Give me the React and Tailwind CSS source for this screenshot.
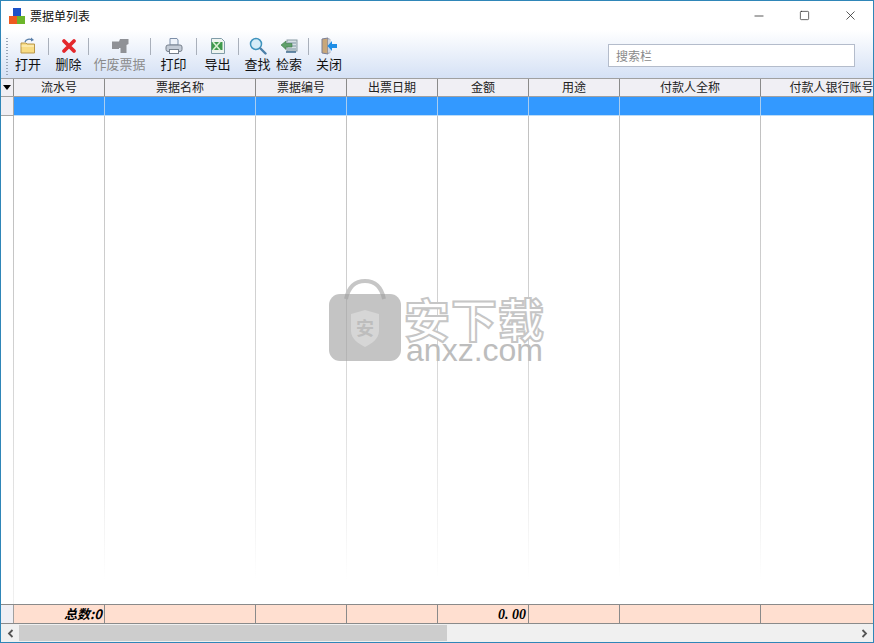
import { Minus, Square, X } from "lucide-react";

const columns = [
  { title: "流水号", w: "w-[91px]" },
  { title: "票据名称", w: "w-[151px]" },
  { title: "票据编号", w: "w-[91px]" },
  { title: "出票日期", w: "w-[91px]" },
  { title: "金额", w: "w-[91px]" },
  { title: "用途", w: "w-[91px]" },
  { title: "付款人全称", w: "w-[141px]" },
  { title: "付款人银行账号", w: "w-[141px]" },
];

function AppLogo() {
  return (
    <svg width="16" height="16" viewBox="0 0 16 16">
      <rect x="4" y="0" width="8" height="8" fill="#1c52c8" />
      <rect x="0" y="8" width="8" height="8" fill="#ee5a20" />
      <rect x="8" y="8" width="8" height="8" fill="#6cb52a" />
    </svg>
  );
}

function OpenIcon() {
  return (
    <svg width="18" height="18" viewBox="0 0 18 18">
      <path d="M2 6h5l1 1h7.500v9H2z" fill="#f8dc84" stroke="#b8964a" />
      <path d="M2.500 9h12.500" stroke="#fff6cf" />
      <path d="M6 5c1-3 4.500-3.500 7-2" fill="none" stroke="#5a7fa8" strokeWidth="1.300" />
      <path d="M12 0.500l3 2.500-3 1.500z" fill="#5a7fa8" />
    </svg>
  );
}

function DeleteIcon() {
  return (
    <svg width="16" height="16" viewBox="0 0 16 16">
      <path d="M3 3l10 10M13 3L3 13" stroke="#e4282c" strokeWidth="3.800" strokeLinecap="round" />
    </svg>
  );
}

function VoidIcon() {
  return (
    <svg width="18" height="16" viewBox="0 0 18 16">
      <path d="M1 3.500h7L9 1h8.500v5l-2 1v8h-6v-5H8v1H1z" fill="#8f9196" />
    </svg>
  );
}

function PrintIcon() {
  return (
    <svg width="18" height="18" viewBox="0 0 18 18">
      <path d="M5 8V1.500h7l1 1.500v5z" fill="#eef3fa" stroke="#7d8fa8" />
      <rect x="1" y="8" width="16" height="6.500" rx="2" fill="#c3cbd6" stroke="#77808c" />
      <rect x="4.500" y="12.500" width="9" height="4" fill="#fff" stroke="#77808c" />
    </svg>
  );
}

function ExportIcon() {
  return (
    <svg width="16" height="18" viewBox="0 0 16 18">
      <path d="M1.500 1.500h10l3 3v12h-13z" fill="#eef4f0" stroke="#7f9ca8" />
      <path d="M1.500 5h11v8h-11z" fill="#3f9a4c" />
      <path d="M3 5l7 8M10 5l-7 8" stroke="#d7efd2" strokeWidth="1.600" />
    </svg>
  );
}

function SearchIcon() {
  return (
    <svg width="18" height="18" viewBox="0 0 18 18">
      <circle cx="7" cy="7" r="5.500" fill="#d5ecf8" stroke="#3f93bd" strokeWidth="1.500" />
      <path d="M11.500 11.500l5 5" stroke="#4c7fa8" strokeWidth="2.400" strokeLinecap="round" />
    </svg>
  );
}

function FilterIcon() {
  return (
    <svg width="18" height="18" viewBox="0 0 18 18">
      <rect x="7" y="3" width="10" height="11" fill="#d6e0e4" stroke="#8a9ba3" />
      <path d="M8 6h8M8 9h8M8 12h8" stroke="#7f97a5" />
      <path d="M1 8l5-4v2.500h6v3.500H6v2.500z" fill="#5fa06a" stroke="#3f7a4c" strokeWidth="0.600" />
      <path d="M6 15h10" stroke="#3e6a8c" strokeWidth="1.500" />
    </svg>
  );
}

function CloseIcon() {
  return (
    <svg width="18" height="18" viewBox="0 0 18 18">
      <path d="M2 2l6-1v16l-6-1z" fill="#c9a77a" stroke="#7a7f96" />
      <path d="M8 2h2v14H8z" fill="#e6ebf4" stroke="#8f97ad" strokeWidth="0.600" />
      <path d="M17 7h-5V4L7.500 9l4.500 5v-3h5z" fill="#1f8ee6" />
    </svg>
  );
}

function Sep() {
  return <div className="h-[17px] w-px self-start mt-[2px] bg-[#a9b0bb]" />;
}

function Tool({ icon, label, w, disabled }) {
  return (
    <div className={`flex flex-col items-center ${w}`}>
      <div className="flex h-[20px] items-center justify-center">{icon}</div>
      <span className={`mt-[-1px] text-[13px] leading-[18px] whitespace-nowrap ${disabled ? "text-[#8b8b8b]" : "text-[#111]"}`}>
        {label}
      </span>
    </div>
  );
}

function Watermark() {
  return (
    <div className="pointer-events-none absolute left-[328px] top-[278px] flex items-start gap-[3px]">
      <svg width="72" height="82" viewBox="0 0 72 82">
        <path d="M17 20C20 6 28 2 36 2s16 4 19 18" fill="none" stroke="#c6c6c6" strokeWidth="4" />
        <rect x="0" y="15" width="72" height="67" rx="11" fill="#a0a0a0" fillOpacity="0.62" />
        <path d="M22 35l14-4 14 4v17c0 8-8 13-14 16-6-3-14-8-14-16z" fill="#d6d6d6" />
        <text x="36" y="56" textAnchor="middle" fontSize="18" fontWeight="700" fill="#bdbdbd" fontFamily="'Noto Sans CJK SC', sans-serif">安</text>
      </svg>
      <div className="mt-[16px] flex flex-col items-center">
        <span className="text-[46px] leading-[44px] tracking-[1px] font-bold text-white [-webkit-text-stroke:2px_#c6c6c6] [font-family:'Noto_Sans_CJK_SC',sans-serif]">
          安下载
        </span>
        <span className="text-[32px] leading-[22px] text-[#bdbdbd] [font-family:'Liberation_Sans',sans-serif]">
          anxz.com
        </span>
      </div>
    </div>
  );
}

export default function App() {
  return (
    <div className="relative flex h-[643px] w-[874px] flex-col overflow-hidden border border-[#2f86b8] bg-white text-[#111] [font-family:'Noto_Sans_CJK_SC','Liberation_Sans',sans-serif]">
      {/* title bar */}
      <div className="flex h-[29px] shrink-0 items-center">
        <div className="ml-[8px] flex items-center gap-[5px]">
          <AppLogo />
          <span className="text-[12px] leading-none">票据单列表</span>
        </div>
        <div className="ml-auto flex items-center text-[#222]">
          <div className="flex w-[45px] justify-center"><Minus size={14} strokeWidth={1.300} /></div>
          <div className="flex w-[46px] justify-center"><Square size={11} strokeWidth={1.500} /></div>
          <div className="flex w-[46px] justify-center"><X size={15} strokeWidth={1.200} /></div>
        </div>
      </div>

      {/* toolbar */}
      <div className="flex h-[48px] shrink-0 items-start bg-gradient-to-b from-white to-[#d5e1f5] pt-[6px]">
        <div className="ml-[5px] mt-[2px] h-[38px] w-[2px] bg-[repeating-linear-gradient(to_bottom,#9aa7b8_0,#9aa7b8_1px,transparent_1px,transparent_3px)]" />
        <Tool icon={<OpenIcon />} label="打开" w="w-[40px]" />
        <Sep />
        <Tool icon={<DeleteIcon />} label="删除" w="w-[39px]" />
        <Sep />
        <Tool icon={<VoidIcon />} label="作废票据" w="w-[61px]" disabled />
        <Sep />
        <Tool icon={<PrintIcon />} label="打印" w="w-[45px]" />
        <Sep />
        <Tool icon={<ExportIcon />} label="导出" w="w-[41px]" />
        <Sep />
        <Tool icon={<SearchIcon />} label="查找" w="w-[37px]" />
        <Tool icon={<FilterIcon />} label="检索" w="w-[32px] pr-[6px]" />
        <Sep />
        <Tool icon={<CloseIcon />} label="关闭" w="w-[40px]" />
        <div className="ml-auto mr-[18px] mt-[8px] flex h-[23px] w-[247px] items-center border border-[#b4bccb] bg-white px-[7px] text-[12px] text-[#8a8a8a]">
          搜索栏
        </div>
      </div>

      {/* grid header */}
      <div className="flex h-[19px] shrink-0 border-y border-[#a0a0a0] bg-[#f0eff4]">
        <div className="flex w-[13px] shrink-0 items-center justify-center border-r border-[#8a8a8a]">
          <div className="h-0 w-0 border-x-[4px] border-t-[5px] border-x-transparent border-t-black" />
        </div>
        {columns.map((c, i) => (
          <div
            key={c.title}
            className={`${c.w} shrink-0 whitespace-nowrap text-center text-[12px] leading-[16px] text-[#222] ${i < 7 ? "border-r border-[#8a8a8a]" : ""}`}
          >
            {c.title}
          </div>
        ))}
      </div>

      {/* selected row */}
      <div className="flex h-[19px] shrink-0">
        <div className="w-[13px] shrink-0 border-r border-b border-[#a6a6a6] bg-[#f0eff4]" />
        {columns.map((c, i) => (
          <div key={c.title} className={`${c.w} shrink-0 border-b border-[#bcdcf7] bg-[#3399ff] ${i < 7 ? "border-r border-r-[#a9cdf0]" : ""}`} />
        ))}
      </div>

      {/* empty body, the grid lines fade out */}
      <div className="flex min-h-0 flex-1">
        <div className="flex w-[13px] shrink-0 justify-end">
          <div className="w-px bg-gradient-to-b from-[#b5b5b5] to-[#f0f0f0]" />
        </div>
        {columns.map((c, i) => (
          <div key={c.title} className={`${c.w} flex shrink-0 justify-end`}>
            {i < 7 && <div className="w-px bg-gradient-to-b from-[#c0c0c0] via-[#dcdcdc] via-60% to-[#ffffff] to-95%" />}
          </div>
        ))}
      </div>

      {/* totals row */}
      <div className="flex h-[20px] shrink-0 border-y border-[#8a8a8a] bg-[#ffdfd0]">
        <div className="w-[13px] shrink-0 border-r border-[#a0a0a0] bg-[#f0eff4]" />
        {columns.map((c, i) => (
          <div
            key={c.title}
            className={`${c.w} shrink-0 whitespace-nowrap pr-[2px] text-right text-[13px] font-bold italic leading-[17px] text-black ${i < 7 ? "border-r border-[#8a8a8a]" : ""}`}
          >
            {i === 0 && "总数:0"}
            {i === 4 && <span className="text-[14px] [font-family:'Liberation_Serif',serif]">0. 00</span>}
          </div>
        ))}
      </div>

      {/* horizontal scrollbar */}
      <div className="flex h-[18px] shrink-0 items-center bg-[#f0f0f0] py-px">
        <svg className="ml-[6px] w-[7px]" width="7" height="9" viewBox="0 0 7 9">
          <path d="M5.500 1L2 4.500 5.500 8" fill="none" stroke="#555" strokeWidth="1.800" />
        </svg>
        <div className="ml-[5px] h-full w-[428px] bg-[#cdcdcd]" />
        <svg className="ml-auto mr-[5px]" width="7" height="9" viewBox="0 0 7 9">
          <path d="M1.500 1L5 4.500 1.500 8" fill="none" stroke="#555" strokeWidth="1.800" />
        </svg>
      </div>

      <Watermark />
    </div>
  );
}
